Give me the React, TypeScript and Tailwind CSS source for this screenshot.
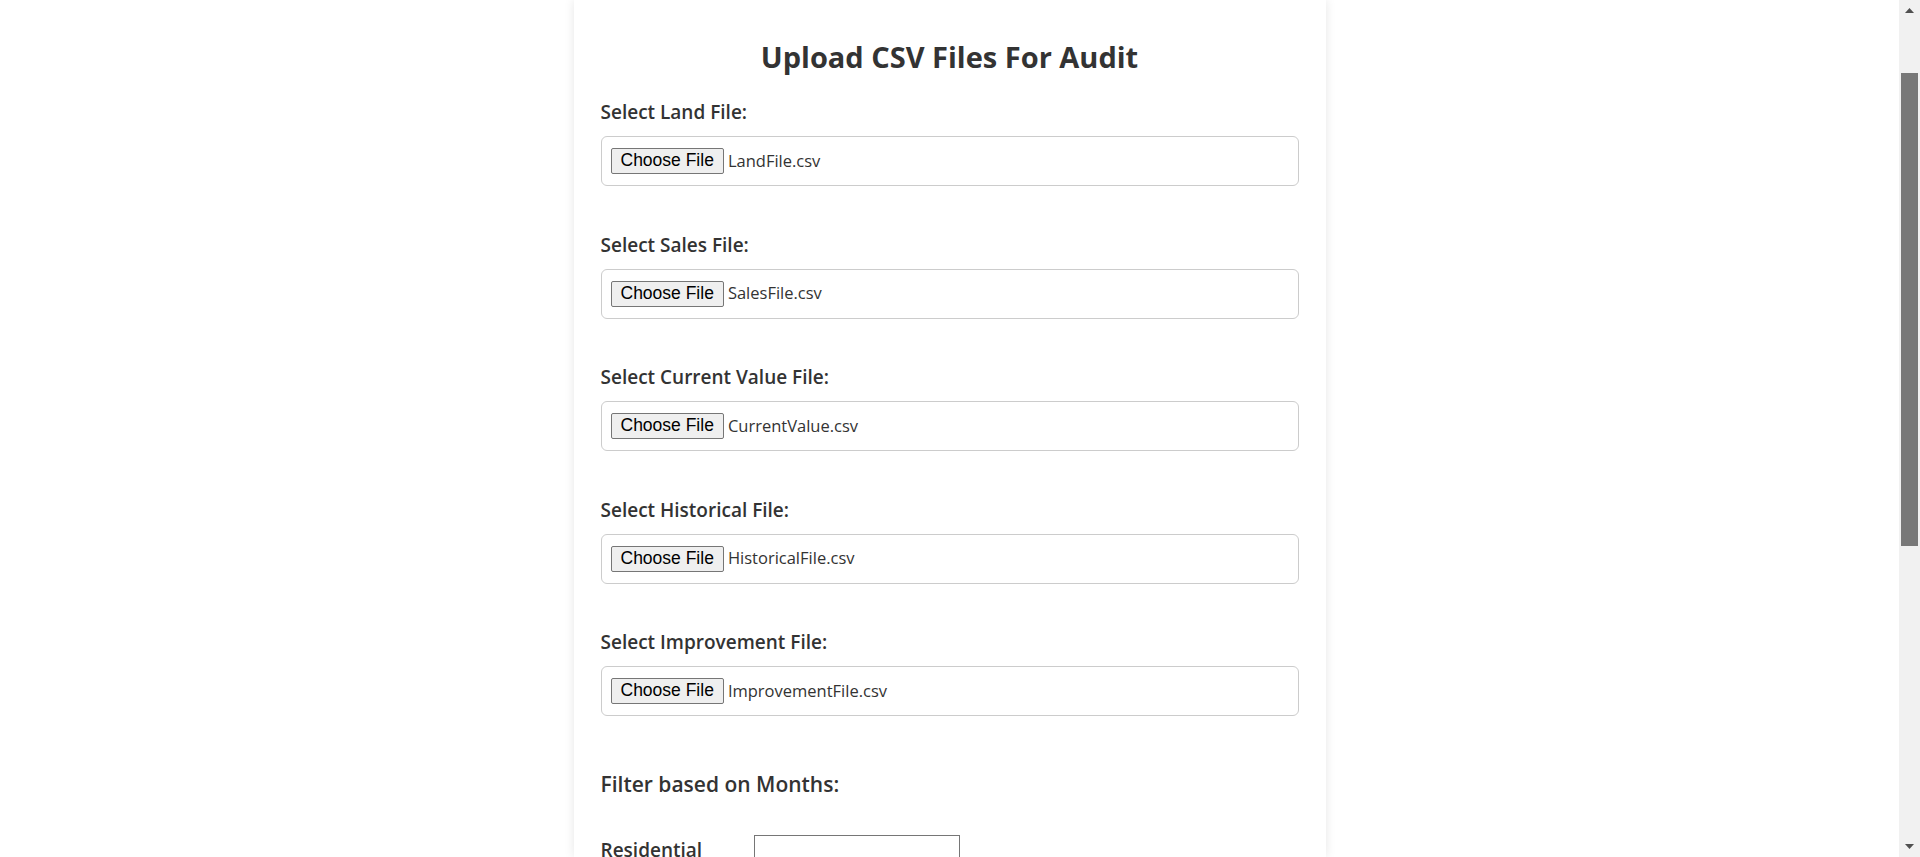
const files = [
  { label: "Select Land File:", name: "LandFile.csv" },
  { label: "Select Sales File:", name: "SalesFile.csv" },
  { label: "Select Current Value File:", name: "CurrentValue.csv" },
  { label: "Select Historical File:", name: "HistoricalFile.csv" },
  { label: "Select Improvement File:", name: "ImprovementFile.csv" },
]

function FilePicker({ name }: { name: string }) {
  return (
    <div className="mt-[10px] flex h-[50px] items-center rounded-[6px] border border-[#cccccc] bg-white pl-[9px]">
      <button
        type="button"
        className="h-[26px] rounded-[2px] border border-[#767676] bg-[#efefef] px-[9px] text-[17.5px] leading-none text-black [font-family:'Liberation_Sans',Arial,sans-serif]"
      >
        Choose File
      </button>
      <span className="ml-[4px] text-[16.5px] text-[#333333]">{name}</span>
    </div>
  )
}

function Scrollbar() {
  return (
    <div className="flex h-full w-[21px] shrink-0 flex-col bg-[#f1f1f1]">
      <div className="flex h-[21px] items-center justify-center">
        <svg width="9" height="5" viewBox="0 0 9 5">
          <path d="M0 5 L4.5 0 L9 5 Z" fill="#505050" />
        </svg>
      </div>
      <div className="h-[52px]" />
      <div className="mx-[2px] h-[473px] bg-[#787878]" />
      <div className="flex-1" />
      <div className="flex h-[21px] items-center justify-center">
        <svg width="9" height="5" viewBox="0 0 9 5">
          <path d="M0 0 L4.5 5 L9 0 Z" fill="#505050" />
        </svg>
      </div>
    </div>
  )
}

export default function App() {
  return (
    <div className="flex h-[857px] w-full overflow-hidden bg-white text-[#333333] [font-family:'Open_Sans',sans-serif]">
      <div className="flex flex-1 justify-center">
        <div className="w-[752px] bg-white px-[27px] pt-[39px] shadow-[0_0_10px_rgba(0,0,0,0.1)]">
          <h2 className="text-center text-[29px] leading-[35px] font-bold">Upload CSV Files For Audit</h2>

          <div className="mt-[25px]">
            {files.map((f) => (
              <div key={f.label} className="mb-[45.5px]">
                <label className="block text-[19px] leading-[27px] font-semibold">{f.label}</label>
                <FilePicker name={f.name} />
              </div>
            ))}
          </div>

          {/* month filters */}
          <h3 className="mt-[53px] text-[21px] leading-[30px] font-semibold">Filter based on Months:</h3>
          <div className="mt-[36px] flex items-start">
            <label className="mt-[2px] w-[153px] text-[19px] leading-[27px] font-semibold">Residential</label>
            <input type="text" className="h-[28px] w-[206px] border border-[#767676] bg-white" />
          </div>
        </div>
      </div>
      <Scrollbar />
    </div>
  )
}
